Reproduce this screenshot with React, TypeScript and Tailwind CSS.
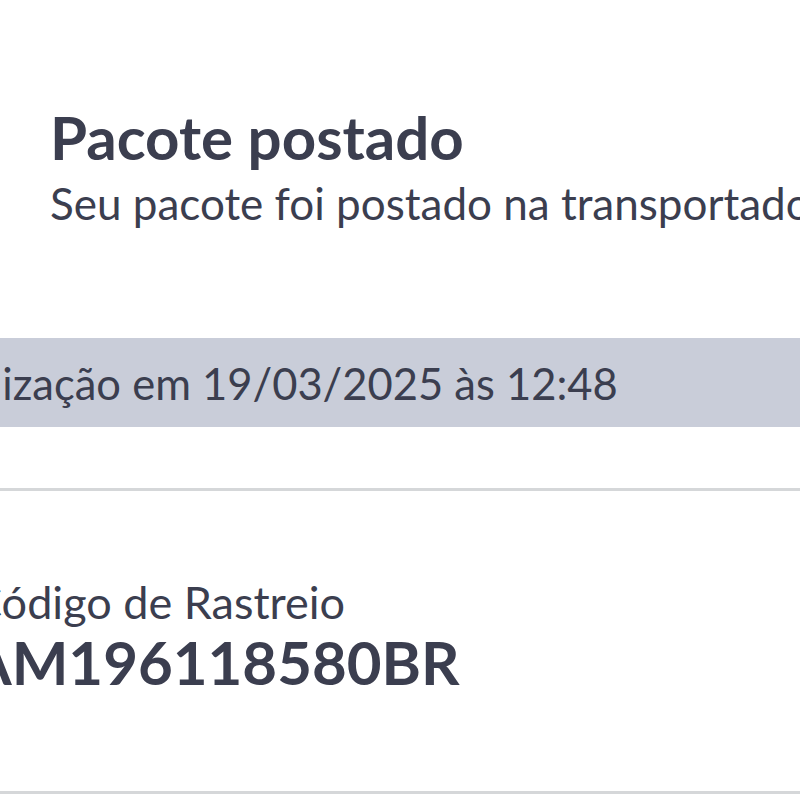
import React from 'react';

const App: React.FC = () => {
  return (
    <div className="w-[800px] h-[800px] overflow-hidden bg-white font-['Lato',sans-serif] text-[#3b3e4f]">
      {/* Status header */}
      <div className="pt-[102px] pl-[50px]">
        <h1 className="text-[60px] font-bold leading-[70px] whitespace-nowrap">Pacote postado</h1>
        <p className="mt-[6px] text-[44px] leading-[50px] whitespace-nowrap">Seu pacote foi postado na transportadora</p>
      </div>

      {/* Last update */}
      <div className="mt-[110px] h-[89px] bg-[#c9cdd9] flex items-center overflow-hidden">
        <span className="-ml-[228px] text-[43.5px] leading-[50px] whitespace-nowrap">Última atualização em 19/03/2025 às 12:48</span>
      </div>

      <div className="mt-[61px] h-[3px] bg-[#d5d7d9]" />

      {/* Tracking code */}
      <div className="pt-[86px] h-[300px] overflow-hidden">
        <p className="-ml-[28px] text-[45px] leading-[50px] whitespace-nowrap">Código de Rastreio</p>
        <p className="-ml-[30px] text-[60px] font-bold leading-[70px] whitespace-nowrap">AM196118580BR</p>
      </div>

      <div className="h-[3px] bg-[#d5d7d9]" />
    </div>
  );
};

export default App;
